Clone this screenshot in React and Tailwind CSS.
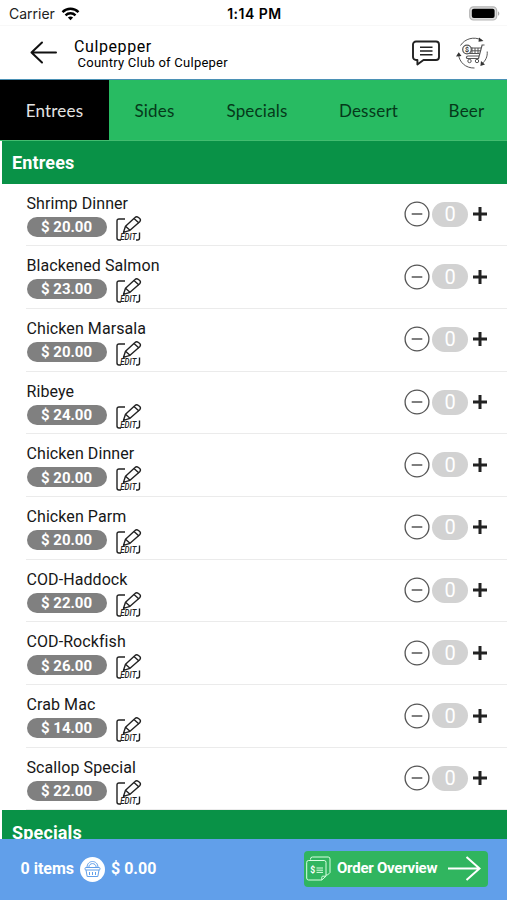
import { useState } from 'react'

const categories = [
  { name: 'Entrees', width: 'w-[109px]' },
  { name: 'Sides', width: 'w-[91px]' },
  { name: 'Specials', width: 'w-[114px]' },
  { name: 'Dessert', width: 'w-[109px]' },
  { name: 'Beer', width: 'w-[87px]' },
]

const entrees = [
  { name: 'Shrimp Dinner', price: '20.00' },
  { name: 'Blackened Salmon', price: '23.00' },
  { name: 'Chicken Marsala', price: '20.00' },
  { name: 'Ribeye', price: '24.00' },
  { name: 'Chicken Dinner', price: '20.00' },
  { name: 'Chicken Parm', price: '20.00' },
  { name: 'COD-Haddock', price: '22.00' },
  { name: 'COD-Rockfish', price: '26.00' },
  { name: 'Crab Mac', price: '14.00' },
  { name: 'Scallop Special', price: '22.00' },
]

function WifiIcon() {
  return (
    <svg className="ml-1.5 h-[14px] w-[19px]" viewBox="0 0 18 14" fill="none" stroke="#000" strokeWidth="2.4">
      <path d="M1 5.1C5.5.6 12.5.6 17 5.1" />
      <path d="M4 8.3c2.8-2.7 7.2-2.7 10 0" />
      <path d="M6.4 10.5c1.5-1.3 3.7-1.3 5.2 0L9 13.2z" fill="#000" stroke="none" />
    </svg>
  )
}

function BatteryIcon() {
  return (
    <svg className="h-[15px] w-[31px]" viewBox="0 0 31 15" fill="none">
      <rect x=".7" y=".8" width="27" height="13.2" rx="3.8" fill="#ddd" stroke="#b5b5b5" strokeWidth="1.2" />
      <rect x="2.8" y="2.8" width="22.8" height="9.2" rx="2" fill="#000" />
      <path d="M29 5.2c1.8.8 1.8 3.8 0 4.6z" fill="#aaa" />
    </svg>
  )
}

function BackIcon() {
  return (
    <svg className="h-6 w-7" viewBox="0 0 28 24" fill="none" stroke="#111" strokeWidth="2" strokeLinecap="round" strokeLinejoin="round">
      <path d="M26 11.5H1.5M12 1.5l-10.500 10 10.500 10" />
    </svg>
  )
}

function ChatIcon() {
  return (
    <svg className="h-[26px] w-7" viewBox="0 0 28 26" fill="none" stroke="#222" strokeWidth="1.9" strokeLinejoin="round">
      <path d="M4 1.5h20a3 3 0 0 1 3 3V17a3 3 0 0 1-3 3H11.5L5.4 24.5V20H4a3 3 0 0 1-3-3V4.5a3 3 0 0 1 3-3z" />
      <path d="M8 7.2h12.500M8 11h12.500M8 14.8h12.500" strokeWidth="1.5" />
    </svg>
  )
}

function ReorderIcon() {
  return (
    <svg className="h-[34px] w-[34px]" viewBox="0 0 34 34" fill="none" stroke="#555" strokeWidth="1">
      <path d="M4.5 9.5C9 2.5 18 .2 25.5 4M31.2 15.5c.5 5-1.7 9.5-5.5 12.5M18.5 32C9.5 32.3 3.2 26 2.6 18.5" />
      <path d="m23 1.500 4.500 3.500-5 .8zM0 20.500l2.700-4.300L5.500 20zM25 25l-.6 5 4.600-1.600z" fill="#333" stroke="none" />
      <path d="M28.500 9h-2.400l-3.600 13.500H11.800c-2 0-1.600-2.500.2-2.500h11" strokeWidth="1.200" />
      <path d="M14.500 12H25M15 14.800h9.500M13 17.500h10.500M16 11.500V18M19 12v6M22 12v6" />
      <circle cx="11" cy="13.500" r="4.300" fill="#fff" strokeWidth="1.200" />
      <text x="11" y="16" textAnchor="middle" fontSize="7" fontWeight="700" fill="#333" stroke="none" className="font-['Roboto',sans-serif]">$</text>
      <circle cx="13.500" cy="25" r="1.700" />
      <circle cx="21" cy="25" r="1.700" />
    </svg>
  )
}

function EditIcon() {
  return (
    <svg className="h-[26px] w-[26px]" viewBox="0 0 26 26" fill="none" stroke="#222" strokeWidth="1.400" strokeLinejoin="round">
      <path d="M9 3H3Q1 3 1 5v17q0 2 2 2h2M23.500 16.500V22q0 2-2 2H20" />
      <path d="m7.500 16.300 2-6L19 1.500q1.500-1.500 3.500 0l1.200 1q1.500 1.500 0 3.300L14 14.300z" />
      <path d="m9.500 10.300 4.500 4M18 2.500l5 4.500" />
      <text x="12.300" y="24.400" textAnchor="middle" textLength="16" lengthAdjust="spacingAndGlyphs" fontSize="8.500" fontStyle="italic" fontWeight="500" fill="#222" stroke="none" className="font-['Roboto',sans-serif]">EDIT</text>
    </svg>
  )
}

function BasketIcon() {
  return (
    <svg className="h-[25px] w-[25px]" viewBox="0 0 25 25" fill="none" stroke="#619fea" strokeWidth="1">
      <circle cx="12.500" cy="12.500" r="12.500" fill="#fff" stroke="none" />
      <path d="M7 10.500C7 2.500 18 2.500 18 10.500M8.800 10.500c0-5.200 7.400-5.200 7.400 0" />
      <rect x="5" y="10.500" width="15" height="2.500" rx="1" />
      <path d="m6 13 1.200 6.500h10.600L19 13M9.500 15v3M12.500 15v3M15.500 15v3" />
    </svg>
  )
}

function OrderIcon() {
  return (
    <svg className="h-[25px] w-[25px]" viewBox="0 0 25 25" fill="none" stroke="#d9ffe2" strokeWidth="1">
      <path d="M4.500 3.500V3Q4.500 1 6.500 1h15.700Q24 1 24 3v13.500L21.500 19H20" />
      <path d="M2.500 4.500h15.700q1.800 0 1.800 2v13.700L15.800 24H2.500Q.7 24 .7 22V6.500q0-2 1.800-2zM20 20.200h-3.200q-1 0-1 1V24" />
      <text x="6.600" y="17.400" textAnchor="middle" fontSize="8.500" fontWeight="700" fill="#fff" stroke="none" className="font-['Roboto',sans-serif]">$</text>
      <path d="M10.500 12h6.500M10.500 14.200h6.500M10.500 16.400h6.500" />
    </svg>
  )
}

function MenuItem({ item }) {
  const [count, setCount] = useState(0)

  return (
    <li className="ml-[26px] flex h-[62.7px] justify-between border-b border-[#ebebeb] pt-[10px]">
      <div className="pl-[0.5px]">
        <h3 className="h-[22px] text-[16px] leading-[20px] tracking-[0.08px] text-[#171717]">{item.name}</h3>
        <div className="flex">
          <span className="mt-px flex h-5 w-[80px] items-center justify-center rounded-full bg-[#808080] pt-px text-[15px] font-bold text-white">
            $ {item.price}
          </span>
          <button className="ml-[9px] h-[26px]" aria-label="Edit">
            <EditIcon />
          </button>
        </div>
      </div>
      <div className="mt-[7.5px] mr-[20px] flex h-[26px] items-center">
        <button aria-label="Remove one" onClick={() => setCount(Math.max(0, count - 1))}>
          <svg className="h-[26px] w-[26px]" viewBox="0 0 26 26" fill="none" stroke="#555">
            <circle cx="13" cy="13" r="11.9" strokeWidth="1.3" />
            <path d="M7.7 13h10.6" strokeWidth="1.5" />
          </svg>
        </button>
        <span className="ml-[2px] flex h-[25px] w-[36px] items-center justify-center rounded-full bg-[#d2d2d2] text-[20px] text-white">
          {count}
        </span>
        <button className="ml-[5px]" aria-label="Add one" onClick={() => setCount(count + 1)}>
          <svg className="h-[14px] w-[14px]" viewBox="0 0 14 14" stroke="#222" strokeWidth="3">
            <path d="M0 7h14M7 0v14" />
          </svg>
        </button>
      </div>
    </li>
  )
}

function SectionTitle({ children }) {
  return (
    <h2 className="ml-[2px] flex h-[42.5px] shrink-0 items-center bg-[#099247] pt-px pl-[10px] text-[18px] font-bold tracking-[0.15px] text-white">
      {children}
    </h2>
  )
}

export default function App() {
  const [active, setActive] = useState('Entrees')

  return (
    <div className="flex h-[900px] w-[507px] flex-col overflow-hidden bg-white font-['Roboto',sans-serif] text-black">
      <div className="grid h-[26px] shrink-0 grid-cols-3 items-center border-b border-[#f8f8f8] pt-[2px] pr-[7px] pl-[9px] font-['Inter',sans-serif] text-[14px]">
        <div className="flex items-center text-[#222]">
          Carrier
          <WifiIcon />
        </div>
        <div className="text-center font-semibold tracking-[0.5px]">1:14 PM</div>
        <div className="flex justify-end">
          <BatteryIcon />
        </div>
      </div>

      <header className="flex h-[54px] shrink-0 items-center border-b border-[#4b91b5] pr-[17px] pl-[30px]">
        <button aria-label="Back">
          <BackIcon />
        </button>
        <div className="ml-4 pt-[3px]">
          <h1 className="text-[16px] leading-[17px] tracking-[0.6px]">Culpepper</h1>
          <p className="pl-[3.5px] text-[13px] leading-[15px] tracking-[0.25px]">Country Club of Culpeper</p>
        </div>
        <div className="ml-auto flex items-center gap-[16px]">
          <button aria-label="Messages">
            <ChatIcon />
          </button>
          <button aria-label="Reorder">
            <ReorderIcon />
          </button>
        </div>
      </header>

      <nav className="flex h-[61px] shrink-0 overflow-hidden border-b border-[#43bd70] bg-[#28bb62] font-['Lato',sans-serif] text-[17px] tracking-[0.2px]">
        {categories.map((category) => (
          <button
            key={category.name}
            onClick={() => setActive(category.name)}
            className={`shrink-0 pt-px ${category.width} ${
              active === category.name ? 'bg-black text-[#e4e4e4]' : 'text-[#05391a]'
            }`}
          >
            {category.name}
          </button>
        ))}
      </nav>

      <main className="min-h-0 flex-1 overflow-hidden">
        <SectionTitle>Entrees</SectionTitle>
        <ul>
          {entrees.map((item) => (
            <MenuItem key={item.name} item={item} />
          ))}
        </ul>
        <SectionTitle>Specials</SectionTitle>
      </main>

      <footer className="flex h-[61px] shrink-0 items-center bg-[#619fea] pr-[19px] pb-[2px] pl-[20.5px] text-[16px] font-bold text-white">
        <span>0 items</span>
        <span className="mx-[6px] pt-px">
          <BasketIcon />
        </span>
        <span>$ 0.00</span>
        <button className="ml-auto flex h-9 w-[184px] items-center rounded bg-[#30b55f] pl-[2px] text-[15px]">
          <OrderIcon />
          <span className="ml-1.5 tracking-[-0.25px]">Order Overview</span>
          <svg className="mr-[7px] ml-auto h-[25px] w-[33px]" viewBox="0 0 33 25" fill="none" stroke="#fff" strokeWidth="2">
            <path d="M0 12.5h31M18.5 1l13 11.5-13 11.5" />
          </svg>
        </button>
      </footer>
    </div>
  )
}
